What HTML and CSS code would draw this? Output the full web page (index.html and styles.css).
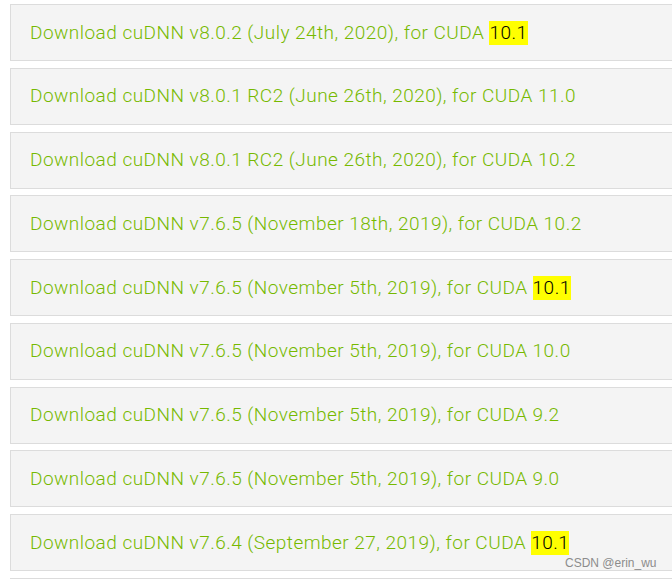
FILE: index.html
```html
<!DOCTYPE html>
<html>
<head>
<meta charset="utf-8">
<link rel="stylesheet" href="styles.css">
</head>
<body>
<div class="list">
  <div class="item"><a class="link">Download cuDNN v8.0.2 (July 24th, 2020), for CUDA <span class="hl">10.1</span></a></div>
  <div class="item"><a class="link">Download cuDNN v8.0.1 RC2 (June 26th, 2020), for CUDA 11.0</a></div>
  <div class="item"><a class="link">Download cuDNN v8.0.1 RC2 (June 26th, 2020), for CUDA 10.2</a></div>
  <div class="item"><a class="link">Download cuDNN v7.6.5 (November 18th, 2019), for CUDA 10.2</a></div>
  <div class="item"><a class="link">Download cuDNN v7.6.5 (November 5th, 2019), for CUDA <span class="hl">10.1</span></a></div>
  <div class="item"><a class="link">Download cuDNN v7.6.5 (November 5th, 2019), for CUDA 10.0</a></div>
  <div class="item"><a class="link">Download cuDNN v7.6.5 (November 5th, 2019), for CUDA 9.2</a></div>
  <div class="item"><a class="link">Download cuDNN v7.6.5 (November 5th, 2019), for CUDA 9.0</a></div>
  <div class="item"><a class="link">Download cuDNN v7.6.4 (September 27, 2019), for CUDA <span class="hl">10.1</span></a></div>
  <div class="item-edge"></div>
</div>
<div class="watermark">CSDN @erin_wu</div>
</body>
</html>
```
FILE: styles.css
```css
html, body {
  margin: 0;
  padding: 0;
  background: #ffffff;
  overflow: hidden;
}
body {
  width: 672px;
  height: 579px;
  position: relative;
}
.list {
  display: flex;
  flex-direction: column;
  gap: 6.75px;
  padding: 4px 0 0 10px;
}
.item {
  box-sizing: border-box;
  height: 57px;
  width: 662px;
  flex: none;
  background: #f4f4f4;
  border: 1px solid #dcdcdc;
  border-right: none;
  display: flex;
  align-items: center;
  padding-left: 19px;
  overflow: hidden;
}
.item-edge {
  box-sizing: border-box;
  height: 1px;
  width: 662px;
  border-top: 1px solid #dcdcdc;
}
.link {
  font-family: Roboto, "Liberation Sans", sans-serif;
  font-weight: 300;
  font-size: 19px;
  letter-spacing: 0.47px;
  color: #76b900;
  white-space: nowrap;
  line-height: 21px;
  margin-top: -1px;
}
.hl {
  background: #ffff00;
  color: #000000;
  padding-bottom: 1px;
}
.watermark {
  position: absolute;
  left: 565px;
  top: 556px;
  font-family: "Liberation Sans", Arial, sans-serif;
  font-size: 12px;
  color: #8c8c8c;
  white-space: nowrap;
}
```
